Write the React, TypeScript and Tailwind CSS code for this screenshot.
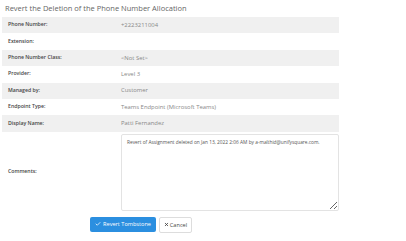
import { Check, X } from 'lucide-react';

const rows = [
  { label: 'Phone Number:', value: '+2223211004' },
  { label: 'Extension:', value: '' },
  { label: 'Phone Number Class:', value: '<Not Set>' },
  { label: 'Provider:', value: 'Level 3' },
  { label: 'Managed by:', value: 'Customer' },
  { label: 'Endpoint Type:', value: 'Teams Endpoint (Microsoft Teams)' },
  { label: 'Display Name:', value: 'Patti Fernandez' },
];

export default function App() {
  return (
    <div className="h-[241px] w-[406px] bg-white px-[2px] pt-[3px] font-['Open_Sans',sans-serif]">
      <h1 className="pl-[3px] text-[7.5px] leading-[11px] text-[#666]">
        Revert the Deletion of the Phone Number Allocation
      </h1>
      <div className="mt-[3px] w-[337px]">
        {rows.map((row, i) => (
          <div
            key={row.label}
            className={`flex h-[16.4px] items-center ${i % 2 === 0 ? 'bg-[#f0f0f0]' : 'bg-white'}`}
          >
            <div className="w-[119px] pl-[6px] text-[5.2px] font-semibold text-[#444]">{row.label}</div>
            <div className="text-[5.9px] text-[#888]">{row.value}</div>
          </div>
        ))}
        <div className="flex items-center py-[2px]">
          <div className="w-[119px] pl-[6px] text-[5.2px] font-semibold text-[#444]">Comments:</div>
          <textarea
            className="h-[77px] flex-1 resize-y rounded-[2px] border border-[#e3e3e3] px-[5px] py-[4px] text-[4.8px] text-[#555] outline-none"
            defaultValue="Revert of Assignment deleted on Jan 13, 2022 2:06 AM by a-malthid@unifysquare.com."
          />
        </div>
      </div>
      <div className="mt-[4px] flex gap-[3px] pl-[88px]">
        <button className="flex h-[15px] w-[66px] items-center justify-center gap-[2px] rounded-[2px] bg-[#2b8fe0] text-[5.6px] text-white">
          <Check size={6} strokeWidth={3} />
          Revert Tombstone
        </button>
        <button className="flex h-[16px] w-[33px] items-center justify-center gap-[1px] rounded-[2px] border border-[#ddd] bg-white text-[5.6px] text-[#444]">
          <X size={5} strokeWidth={4} />
          Cancel
        </button>
      </div>
    </div>
  );
}
